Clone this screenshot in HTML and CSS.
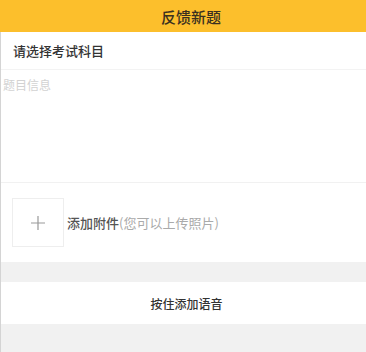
FILE: index.html
```html
<!DOCTYPE html>
<html>

<head>
    <title>反馈新题</title>
    <link rel="stylesheet" href="styles.css">
</head>

<body>
    <div class="page">
        <div class="header">反馈新题</div>

        <div class="content">
            <div class="subjectRow">请选择考试科目</div>

            <div class="questionBox">
                <div class="placeholder">题目信息</div>
            </div>

            <div class="attachRow">
                <div class="addBox">
                    <svg width="14" height="14" viewBox="0 0 14 14">
                        <path d="M7 0 V14 M0 7 H14" stroke="#999" stroke-width="1.2" fill="none" />
                    </svg>
                </div>
                <div class="attachText">添加附件<span class="hint">(您可以上传照片)</span></div>
            </div>

            <div class="spacer"></div>

            <div class="voiceRow">按住添加语音</div>

            <div class="bottomFill"></div>
        </div>
    </div>
</body>

</html>
```

FILE: styles.css
```css
* {
    box-sizing: border-box;
}

body {
    margin: 0;
    font-family: "Noto Sans CJK SC", "Liberation Sans", sans-serif;
    background: #fff;
}

.page {
    width: 366px;
    height: 352px;
    display: flex;
    flex-direction: column;
    overflow: hidden;
}

.header {
    height: 32px;
    padding-left: 16px;
    background-color: #fcbf2c;
    color: #3a3020;
    font-size: 15px;
    font-weight: 500;
    display: flex;
    align-items: center;
    justify-content: center;
    flex-shrink: 0;
}

.content {
    flex: 1;
    display: flex;
    flex-direction: column;
    border-left: 1px solid #d4d4d4;
}

.subjectRow {
    height: 38px;
    padding-left: 12px;
    font-size: 13px;
    font-weight: 500;
    color: #333;
    display: flex;
    align-items: center;
    border-bottom: 1px solid #f3f3f3;
}

.questionBox {
    height: 113px;
    padding: 6px 0 0 2px;
    border-bottom: 1px solid #f1f1f1;
}

.placeholder {
    font-size: 12px;
    color: #d2d2d2;
}

.attachRow {
    display: flex;
    align-items: center;
    padding: 15px 11px;
    gap: 3px;
}

.addBox {
    width: 52px;
    height: 49px;
    border: 1px solid #eee;
    display: flex;
    align-items: center;
    justify-content: center;
}

.attachText {
    font-size: 13px;
    font-weight: 500;
    color: #555;
}

.hint {
    font-weight: 400;
    color: #aaa;
}

.spacer {
    height: 20px;
    background-color: #f1f1f1;
}

.voiceRow {
    height: 42px;
    padding-left: 6px;
    display: flex;
    align-items: center;
    justify-content: center;
    font-size: 12px;
    font-weight: 500;
    color: #333;
}

.bottomFill {
    flex: 1;
    background-color: #f1f1f1;
}
```
